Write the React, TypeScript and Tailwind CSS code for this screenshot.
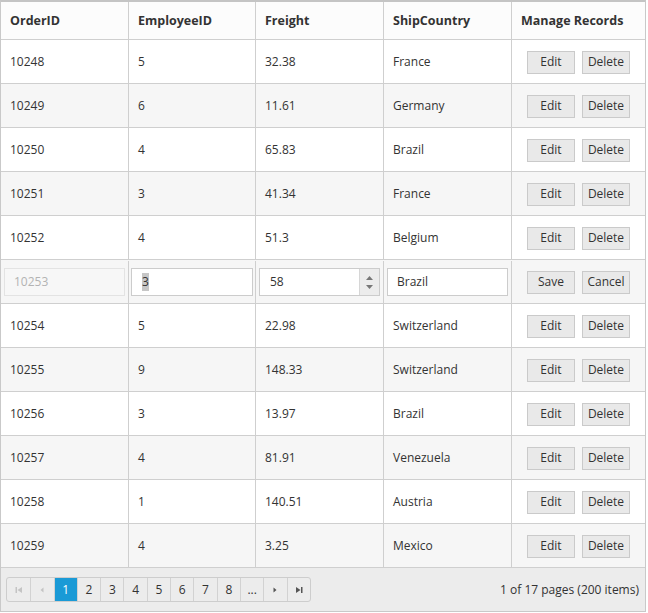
import type { ReactNode } from 'react';

type Order = { id: number; emp: number; freight: string; country: string };

const orders: Order[] = [
  { id: 10248, emp: 5, freight: '32.38', country: 'France' },
  { id: 10249, emp: 6, freight: '11.61', country: 'Germany' },
  { id: 10250, emp: 4, freight: '65.83', country: 'Brazil' },
  { id: 10251, emp: 3, freight: '41.34', country: 'France' },
  { id: 10252, emp: 4, freight: '51.3', country: 'Belgium' },
  { id: 10253, emp: 3, freight: '58', country: 'Brazil' },
  { id: 10254, emp: 5, freight: '22.98', country: 'Switzerland' },
  { id: 10255, emp: 9, freight: '148.33', country: 'Switzerland' },
  { id: 10256, emp: 3, freight: '13.97', country: 'Brazil' },
  { id: 10257, emp: 4, freight: '81.91', country: 'Venezuela' },
  { id: 10258, emp: 1, freight: '140.51', country: 'Austria' },
  { id: 10259, emp: 4, freight: '3.25', country: 'Mexico' },
];

const cols = 'grid grid-cols-[127px_127px_128px_128px_134px]';

function Cell({ children, first }: { children?: ReactNode; first?: boolean }) {
  return (
    <div className={`flex items-center px-[9px] pt-[1px] ${first ? '' : 'border-l border-[#cfcfcf]'}`}>{children}</div>
  );
}

function Btn({ label }: { label: string }) {
  return (
    <button className="h-[23px] w-[48px] border border-[#cacaca] bg-[#e9e9e9] text-[12px] leading-none text-[#333]">
      {label}
    </button>
  );
}

function Actions({ a, b }: { a: string; b: string }) {
  return (
    <div className="flex items-center gap-[7px] border-l border-[#cfcfcf] pl-[15px] pt-[1px]">
      <Btn label={a} />
      <Btn label={b} />
    </div>
  );
}

function EditRow({ o }: { o: Order }) {
  return (
    <div className={`${cols} h-[44px] border-b border-[#cfcfcf] bg-[#f6f6f6] pt-[1px]`}>
      <div className="flex items-center px-[3px]">
        <div className="flex h-[28px] w-full items-center border border-[#e3e3e3] bg-[#f7f7f7] px-[9px] text-[#b3b3b3]">
          {o.id}
        </div>
      </div>
      <div className="flex items-center border-l border-[#cfcfcf] px-[2px]">
        <div className="flex h-[28px] w-full items-center border border-[#cccccc] bg-white px-[10px]">
          <span className="bg-[#c6c6c6]">{o.emp}</span>
        </div>
      </div>
      <div className="flex items-center border-l border-[#cfcfcf] px-[3px]">
        <div className="flex h-[28px] w-full items-center border border-[#cccccc] bg-white">
          <span className="flex-1 pl-[10px]">{o.freight}</span>
          <div className="flex h-full w-[20px] flex-col items-center justify-center gap-[5px] border-l border-[#d6d6d6] bg-[#ececec]">
            <svg width="7" height="4" viewBox="0 0 7 4"><path d="M0 4 L3.5 0 L7 4Z" fill="#777" /></svg>
            <svg width="7" height="4" viewBox="0 0 7 4"><path d="M0 0 L3.5 4 L7 0Z" fill="#777" /></svg>
          </div>
        </div>
      </div>
      <div className="flex items-center border-l border-[#cfcfcf] px-[3px]">
        <div className="flex h-[28px] w-full items-center border border-[#cccccc] bg-white px-[9px]">{o.country}</div>
      </div>
      <div className="flex items-center gap-[7px] border-l border-[#cfcfcf] pl-[15px]">
        <Btn label="Save" />
        <Btn label="Cancel" />
      </div>
    </div>
  );
}

function PagerIcon({ kind, disabled }: { kind: 'first' | 'prev' | 'next' | 'last'; disabled?: boolean }) {
  const c = disabled ? '#c4c4c4' : '#555';
  return (
    <svg width="8" height="8" viewBox="0 0 8 8">
      {kind === 'first' && (
        <>
          <rect x="0.5" y="1" width="1.5" height="6" fill={c} />
          <path d="M7 1 L2.5 4 L7 7Z" fill={c} />
        </>
      )}
      {kind === 'prev' && <path d="M5.5 1.5 L2.5 4 L5.5 6.5Z" fill={c} />}
      {kind === 'next' && <path d="M2.5 1.5 L5.5 4 L2.5 6.5Z" fill={c} />}
      {kind === 'last' && (
        <>
          <path d="M1 1 L5.5 4 L1 7Z" fill={c} />
          <rect x="6" y="1" width="1.5" height="6" fill={c} />
        </>
      )}
    </svg>
  );
}

function Pager() {
  const items: ReactNode[] = [
    <PagerIcon kind="first" disabled />,
    <PagerIcon kind="prev" disabled />,
    '1', '2', '3', '4', '5', '6', '7', '8', '...',
    <PagerIcon kind="next" />,
    <PagerIcon kind="last" />,
  ];
  return (
    <div className="flex h-[25px] overflow-hidden rounded-[3px] border border-[#cdcdcd] bg-[#ececec]">
      {items.map((it, i) => (
        <div
          key={i}
          className={`flex w-[23.3px] items-center justify-center text-[12px] ${i > 0 ? 'border-l border-[#d2d2d2]' : ''} ${
            i === 2 ? 'bg-[#1a9ad6] text-white' : 'text-[#333]'
          }`}
        >
          {it}
        </div>
      ))}
    </div>
  );
}

export default function App() {
  return (
    <div className="w-[648px] bg-white text-[12px] text-[#333]" style={{ fontFamily: '"Open Sans", "Noto Sans", sans-serif' }}>
      <div className="w-[646px] border-x border-t-2 border-[#c9c9c9] border-t-[#c4c4c4]">
        <div className={`${cols} h-[38px] border-b border-[#cfcfcf] bg-[#fcfcfc] text-[12.5px] font-bold`}>
          <Cell first>OrderID</Cell>
          <Cell>EmployeeID</Cell>
          <Cell>Freight</Cell>
          <Cell>ShipCountry</Cell>
          <Cell>Manage Records</Cell>
        </div>
        {orders.map((o, i) =>
          o.id === 10253 ? (
            <EditRow key={o.id} o={o} />
          ) : (
            <div key={o.id} className={`${cols} h-[44px] border-b border-[#cfcfcf] ${i % 2 ? 'bg-[#f6f6f6]' : 'bg-white'}`}>
              <Cell first>{o.id}</Cell>
              <Cell>{o.emp}</Cell>
              <Cell>{o.freight}</Cell>
              <Cell>{o.country}</Cell>
              <Actions a="Edit" b="Delete" />
            </div>
          ),
        )}
        <div className="flex h-[44px] items-center justify-between border-b border-[#c9c9c9] bg-[#ececec] pl-[5px] pr-[6px]">
          <Pager />
          <span className="text-[12px] text-[#333]">1 of 17 pages (200 items)</span>
        </div>
      </div>
    </div>
  );
}
